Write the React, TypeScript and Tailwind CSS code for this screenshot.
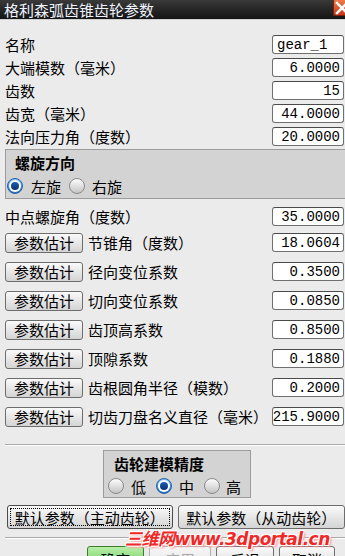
import React from "react";

const Field = ({ value, left }: { value: string; left?: boolean }) => (
  <div
    className={`h-[19px] w-[72px] ml-auto mr-[1px] rounded-[3px] border border-[#6f6f6f] border-t-[#4a4a4a] bg-white flex items-center font-['Liberation_Mono',monospace] text-[14px] leading-none text-black ${
      left ? "justify-start pl-[4px]" : "justify-end pr-[3px]"
    }`}
  >
    {value}
  </div>
);

const Radio = ({ on }: { on?: boolean }) =>
  on ? (
    <div className="w-[16px] h-[16px] rounded-full bg-linear-to-b from-[#7cc4ff] to-[#1d6fcf] border border-[#2a5f9e] flex items-center justify-center shrink-0">
      <div className="w-[12px] h-[12px] rounded-full bg-white flex items-center justify-center">
        <div className="w-[8px] h-[8px] rounded-full bg-linear-to-b from-[#1a5fb8] to-[#0a3170]" />
      </div>
    </div>
  ) : (
    <div className="w-[16px] h-[16px] rounded-full bg-linear-to-b from-[#fdfdfd] to-[#c4c4c4] border border-[#8a8a8a] shrink-0" />
  );

const EstButton = () => (
  <div className="h-[20px] w-[78px] rounded-[3px] border border-[#6d6d6d] bg-linear-to-b from-[#fafafa] to-[#d4d4d4] flex items-center justify-center text-[15px] leading-none text-black shrink-0">
    参数估计
  </div>
);

const Row = ({ label, value, left }: { label: string; value: string; left?: boolean }) => (
  <div className="h-[23px] flex items-center pl-[5px]">
    <span className="text-[15px] leading-none">{label}</span>
    <Field value={value} left={left} />
  </div>
);

const BtnRow = ({ label, value }: { label: string; value: string }) => (
  <div className="h-[29px] flex items-center pl-[5px]">
    <EstButton />
    <span className="ml-[5px] text-[15px] leading-none whitespace-nowrap">{label}</span>
    <Field value={value} />
  </div>
);

const Sep = ({ mt }: { mt: string }) => (
  <div className={`${mt} ml-[5px] h-[2px] border-t border-[#a9a9a9] border-b border-b-white`} />
);

export default function App() {
  return (
    <div className="relative w-[345px] h-[556px] overflow-hidden bg-[#ebebeb] text-black font-['Noto_Sans_CJK_SC',sans-serif]">
      {/* title bar */}
      <div className="h-[19px] bg-linear-to-b from-[#3a3a3a] to-[#141414] flex items-center pl-[4px] relative">
        <span className="text-[15px] leading-none text-[#eef3ff]">格利森弧齿锥齿轮参数</span>
        <div className="absolute right-0 top-0 w-[12px] h-[16px] bg-linear-to-b from-[#f07a4a] to-[#c8361a] rounded-bl-[2px] border-l border-b border-[#7a2410] overflow-hidden">
          <svg width="12" height="16" viewBox="0 0 12 16">
            <path d="M3 3 L13 13 M13 3 L3 13" stroke="white" strokeWidth="2.4" strokeLinecap="square" />
          </svg>
        </div>
      </div>
      <div className="h-[1px] bg-[#d0d0d0]" />

      <div className="pt-[13px]">
        <Row label="名称" value="gear_1" left />
        <Row label="大端模数（毫米）" value="6.0000" />
        <Row label="齿数" value="15" />
        <Row label="齿宽（毫米）" value="44.0000" />
        <Row label="法向压力角（度数）" value="20.0000" />
      </div>

      {/* group 1 */}
      <div className="mt-[1px] ml-[5px] h-[50px] border border-[#9c9c9c] border-r-0 bg-[#d3d3d3] pl-[9px] pt-[4px]">
        <div className="h-[17px] flex items-center text-[15px] font-bold leading-none">螺旋方向</div>
        <div className="mt-[6px] h-[18px] flex items-center -ml-[8px]">
          <Radio on />
          <span className="ml-[8px] text-[15px] leading-none">左旋</span>
          <div className="ml-[8px]">
            <Radio />
          </div>
          <span className="ml-[7px] text-[15px] leading-none">右旋</span>
        </div>
      </div>

      <div className="mt-[6px]">
        <Row label="中点螺旋角（度数）" value="35.0000" />
      </div>
      <div>
        <BtnRow label="节锥角（度数）" value="18.0604" />
        <BtnRow label="径向变位系数" value="0.3500" />
        <BtnRow label="切向变位系数" value="0.0850" />
        <BtnRow label="齿顶高系数" value="0.8500" />
        <BtnRow label="顶隙系数" value="0.1880" />
        <BtnRow label="齿根圆角半径（模数）" value="0.2000" />
        <BtnRow label="切齿刀盘名义直径（毫米）" value="215.9000" />
      </div>

      <Sep mt="mt-[13px]" />

      {/* group 2 */}
      <div className="mt-[4px] ml-[103px] w-[148px] h-[48px] border border-[#9c9c9c] bg-[#d3d3d3] pl-[10px] pt-[4px]">
        <div className="h-[17px] flex items-center text-[15px] font-bold leading-none">齿轮建模精度</div>
        <div className="mt-[5px] h-[18px] flex items-center -ml-[6px]">
          <Radio />
          <span className="ml-[7px] text-[15px] leading-none">低</span>
          <div className="ml-[10px]">
            <Radio on />
          </div>
          <span className="ml-[7px] text-[15px] leading-none">中</span>
          <div className="ml-[10px]">
            <Radio />
          </div>
          <span className="ml-[6px] text-[15px] leading-none">高</span>
        </div>
      </div>

      {/* default buttons */}
      <div className="mt-[7px] flex pl-[7px] gap-[5px]">
        <div className="h-[24px] w-[166px] rounded-[3px] border border-[#4a4a4a] bg-linear-to-b from-[#fafafa] to-[#d4d4d4] p-[2px]">
          <div className="w-full h-full border border-dotted border-black flex items-center justify-center text-[15px] leading-none whitespace-nowrap">
            默认参数（主动齿轮）
          </div>
        </div>
        <div className="h-[24px] w-[168px] rounded-[3px] border border-[#6d6d6d] bg-linear-to-b from-[#fafafa] to-[#d4d4d4] flex items-center justify-center text-[15px] leading-none whitespace-nowrap">
          默认参数（从动齿轮）
        </div>
      </div>

      <Sep mt="mt-[8px]" />

      {/* bottom buttons */}
      <div className="mt-[7px] flex">
        <div className="ml-[87px] h-[26px] w-[57px] rounded-[3px] border border-[#3f7a2f] bg-linear-to-b from-[#b8f0a8] to-[#5cbf4c] flex items-center justify-center text-[15px] leading-none">
          确定
        </div>
        <div className="ml-[5px] h-[26px] w-[62px] rounded-[3px] border border-[#b0b0b0] bg-linear-to-b from-[#f7f7f7] to-[#e0e0e0] flex items-center justify-center text-[15px] leading-none text-[#a8a8a8]">
          应用
        </div>
        <div className="ml-[5px] h-[26px] w-[58px] rounded-[3px] border border-[#6d6d6d] bg-linear-to-b from-[#fafafa] to-[#d4d4d4] flex items-center justify-center text-[15px] leading-none">
          后退
        </div>
        <div className="ml-[5px] h-[26px] w-[56px] rounded-[3px] border border-[#6d6d6d] bg-linear-to-b from-[#fafafa] to-[#d4d4d4] flex items-center justify-center text-[15px] leading-none">
          取消
        </div>
      </div>

      {/* watermark */}
      <div className="absolute left-[125px] top-[531px] text-[17px] font-bold italic leading-none text-[#f02828] whitespace-nowrap font-['DejaVu_Sans','Noto_Sans_CJK_SC',sans-serif] [text-shadow:1px_1px_0_#fff,-1px_-1px_0_#fff,1px_-1px_0_#fff,-1px_1px_0_#fff,2px_2px_2px_#ff9a9a] tracking-[-0.5px]">
        三维网www.3dportal.cn
      </div>
    </div>
  );
}
